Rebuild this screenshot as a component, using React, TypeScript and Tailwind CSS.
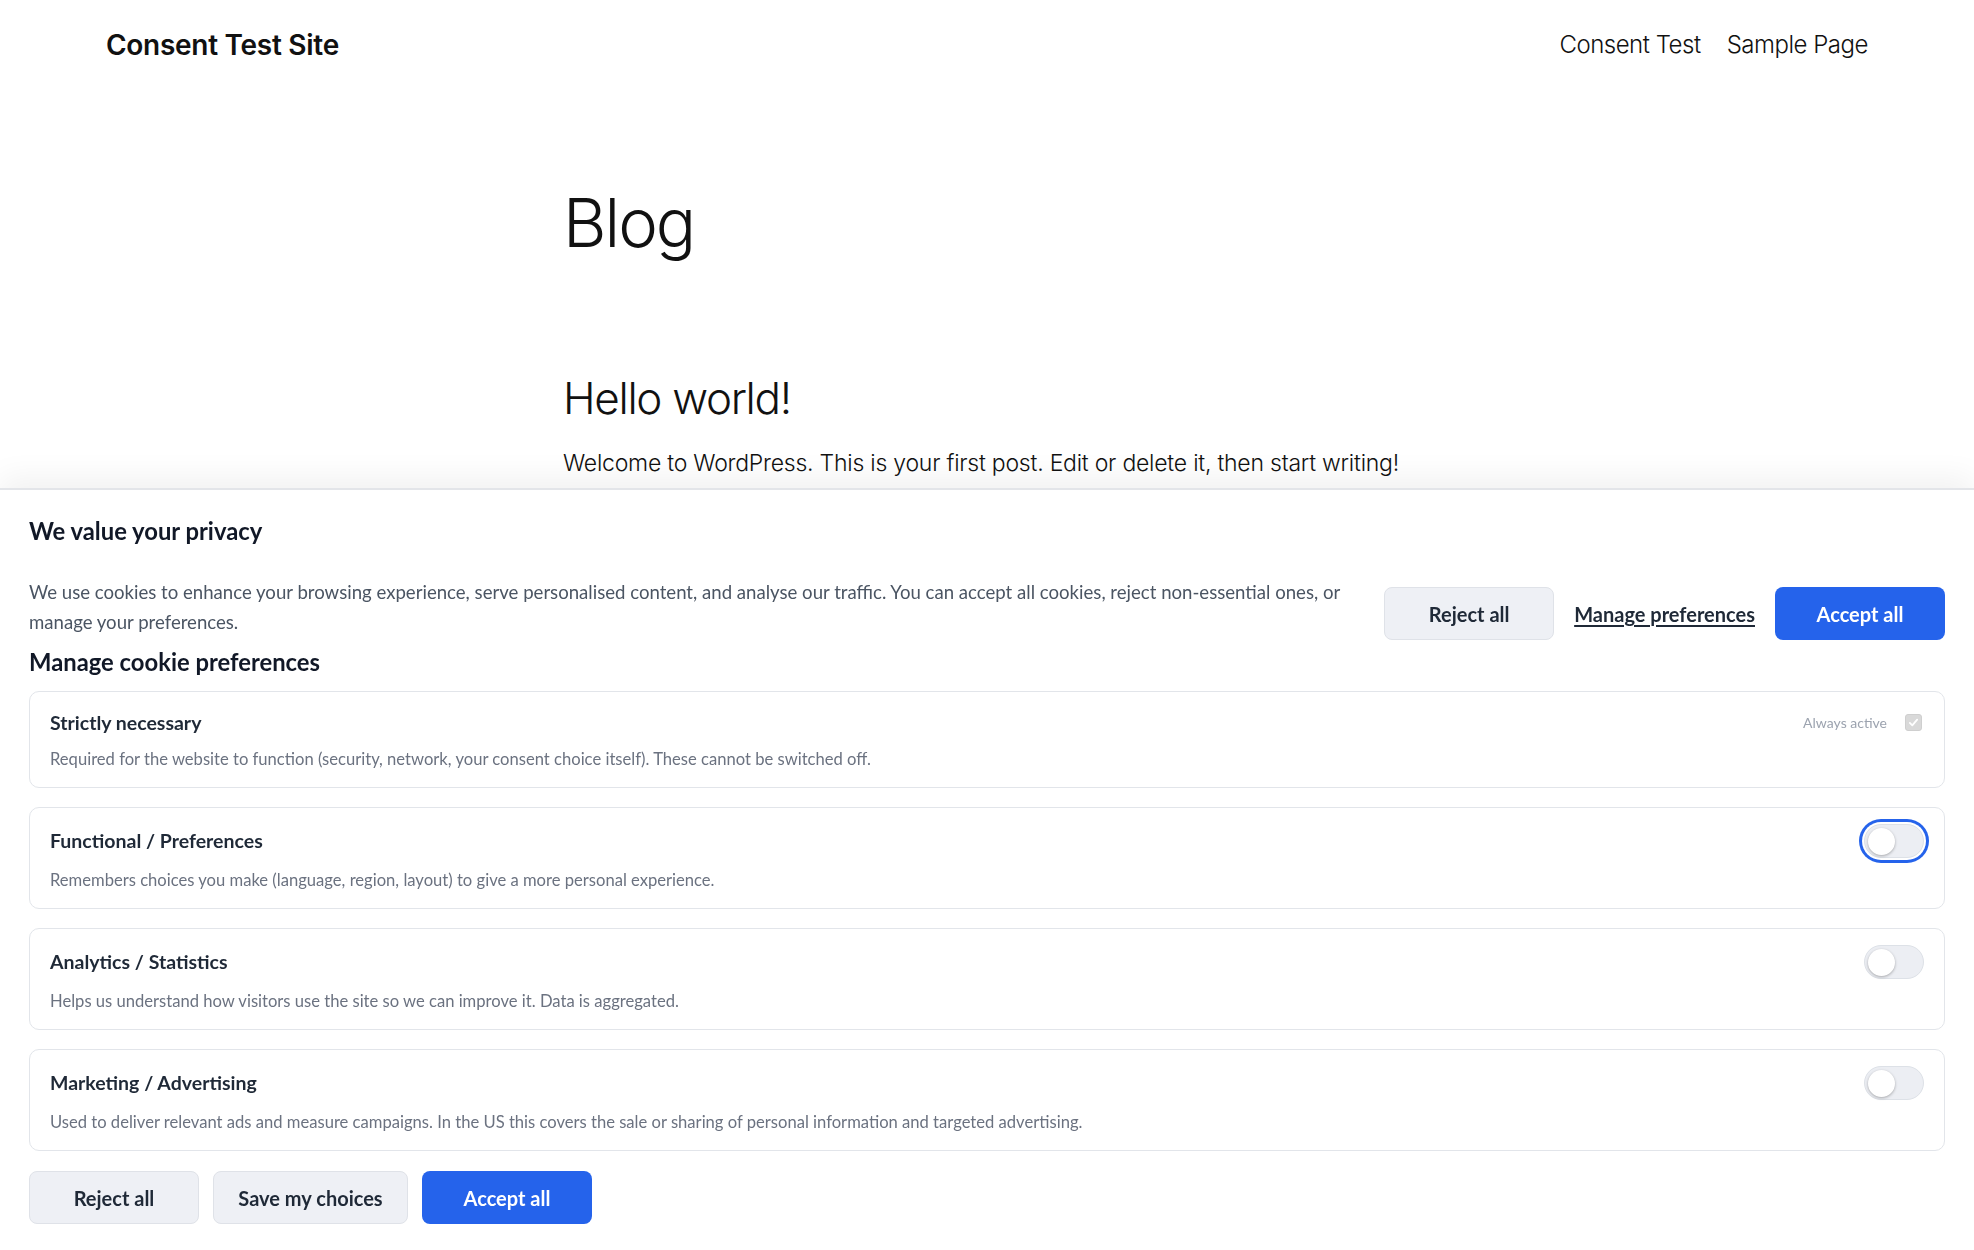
import React from "react";

const site = { fontFamily: "Inter, 'Noto Sans', sans-serif" };
const ui = { fontFamily: "Lato, 'Open Sans', sans-serif" };

function Toggle({ focused }: { focused?: boolean }) {
  return (
    <span
      className={
        "relative inline-flex h-[34px] w-[60px] shrink-0 items-center rounded-full border border-[#dde1e7] bg-[#eceef3] " +
        (focused ? "ring-[3px] ring-[#2563eb] ring-offset-2 ring-offset-white" : "")
      }
    >
      <span className="ml-[3px] h-[27px] w-[27px] rounded-full bg-white shadow-[0_1px_3px_rgba(0,0,0,0.3)]" />
    </span>
  );
}

function Card({
  title,
  desc,
  right,
  rowH,
}: {
  title: string;
  desc: string;
  right: React.ReactNode;
  rowH: string;
}) {
  return (
    <div className="rounded-[10px] border border-[#e2e5ea] bg-white px-[20px] py-[16px]">
      <div className={"flex items-center justify-between " + rowH}>
        <div className="text-[19.5px] font-bold leading-[26px] text-[#1f2937]">{title}</div>
        {right}
      </div>
      <p className="mt-[10px] text-[16.6px] leading-[24px] text-[#6b7280]">{desc}</p>
    </div>
  );
}

export default function App() {
  return (
    <div className="min-h-[1250px] bg-white text-[#111]" style={site}>
      <header className="flex h-[90px] items-center justify-between px-[106px]">
        <div className="text-[28px] font-semibold tracking-[-0.01em] text-[#111]">Consent Test Site</div>
        <nav className="flex gap-[26px] text-[24px] font-light tracking-[-0.02em] text-[#111]">
          <span>Consent Test</span>
          <span>Sample Page</span>
        </nav>
      </header>
      <main className="mx-auto w-[848px]">
        <h1 className="mt-[99px] text-[67px] font-light leading-none tracking-[-0.03em]">Blog</h1>
        <h2 className="mt-[118px] text-[44px] font-light leading-[1.1] tracking-[-0.03em]">Hello world!</h2>
        <p className="mt-[25px] text-[23px] font-light leading-[1.4] tracking-[-0.01em]">
          Welcome to WordPress. This is your first post. Edit or delete it, then start writing!
        </p>
      </main>

      <div
        className="fixed bottom-0 left-0 right-0 border-t-2 border-[#e3e5e9] bg-white px-[29px] pb-[26px] pt-[26px] shadow-[0_-10px_30px_rgba(0,0,0,0.06)]"
        style={ui}
      >
        <h2 className="text-[23.8px] font-bold leading-[30px] text-[#111827]">We value your privacy</h2>
        <div className="mt-[31px] flex items-end gap-[20px]">
          <p className="flex-1 pb-[3px] text-[18.6px] leading-[30px] text-[#4b5563]">
            We use cookies to enhance your browsing experience, serve personalised content, and analyse our traffic. You can accept all cookies, reject non-essential ones, or manage your preferences.
          </p>
          <div className="flex shrink-0 items-center gap-[20px]">
            <button className="h-[53px] w-[170px] rounded-[8px] border border-[#dfe2e8] bg-[#eef0f5] text-[20px] font-bold text-[#1f2937]">
              Reject all
            </button>
            <button className="text-[20px] font-bold text-[#1f2937] underline underline-offset-[3px]">
              Manage preferences
            </button>
            <button className="h-[53px] w-[170px] rounded-[8px] bg-[#2563eb] text-[20px] font-bold text-white">
              Accept all
            </button>
          </div>
        </div>
        <h3 className="mt-[7px] text-[23.8px] font-bold leading-[30px] text-[#111827]">Manage cookie preferences</h3>
        <div className="mt-[14px] flex flex-col gap-[19px]">
          <Card
            rowH="min-h-[29px]"
            title="Strictly necessary"
            desc="Required for the website to function (security, network, your consent choice itself). These cannot be switched off."
            right={
              <div className="flex items-center gap-[18px] pr-[2px]">
                <span className="text-[14px] text-[#9ca3af]">Always active</span>
                <span className="flex h-[17px] w-[17px] items-center justify-center rounded-[3px] border border-[#cfcfcf] bg-[#d9d9d9]">
                  <svg viewBox="0 0 16 16" className="h-[13px] w-[13px]" fill="none" stroke="white" strokeWidth="2.2" strokeLinecap="round" strokeLinejoin="round">
                    <path d="M3.5 8.5l3 3 6-7" />
                  </svg>
                </span>
              </div>
            }
          />
          <Card
            rowH="min-h-[34px]"
            title="Functional / Preferences"
            desc="Remembers choices you make (language, region, layout) to give a more personal experience."
            right={<Toggle focused />}
          />
          <Card
            rowH="min-h-[34px]"
            title="Analytics / Statistics"
            desc="Helps us understand how visitors use the site so we can improve it. Data is aggregated."
            right={<Toggle />}
          />
          <Card
            rowH="min-h-[34px]"
            title="Marketing / Advertising"
            desc="Used to deliver relevant ads and measure campaigns. In the US this covers the sale or sharing of personal information and targeted advertising."
            right={<Toggle />}
          />
        </div>
        <div className="mt-[20px] flex gap-[14px]">
          <button className="h-[53px] w-[170px] rounded-[8px] border border-[#dfe2e8] bg-[#eef0f5] text-[20px] font-bold text-[#1f2937]">
            Reject all
          </button>
          <button className="h-[53px] w-[195px] rounded-[8px] border border-[#dfe2e8] bg-[#eef0f5] text-[20px] font-bold text-[#1f2937]">
            Save my choices
          </button>
          <button className="h-[53px] w-[170px] rounded-[8px] bg-[#2563eb] text-[20px] font-bold text-white">
            Accept all
          </button>
        </div>
      </div>
    </div>
  );
}
